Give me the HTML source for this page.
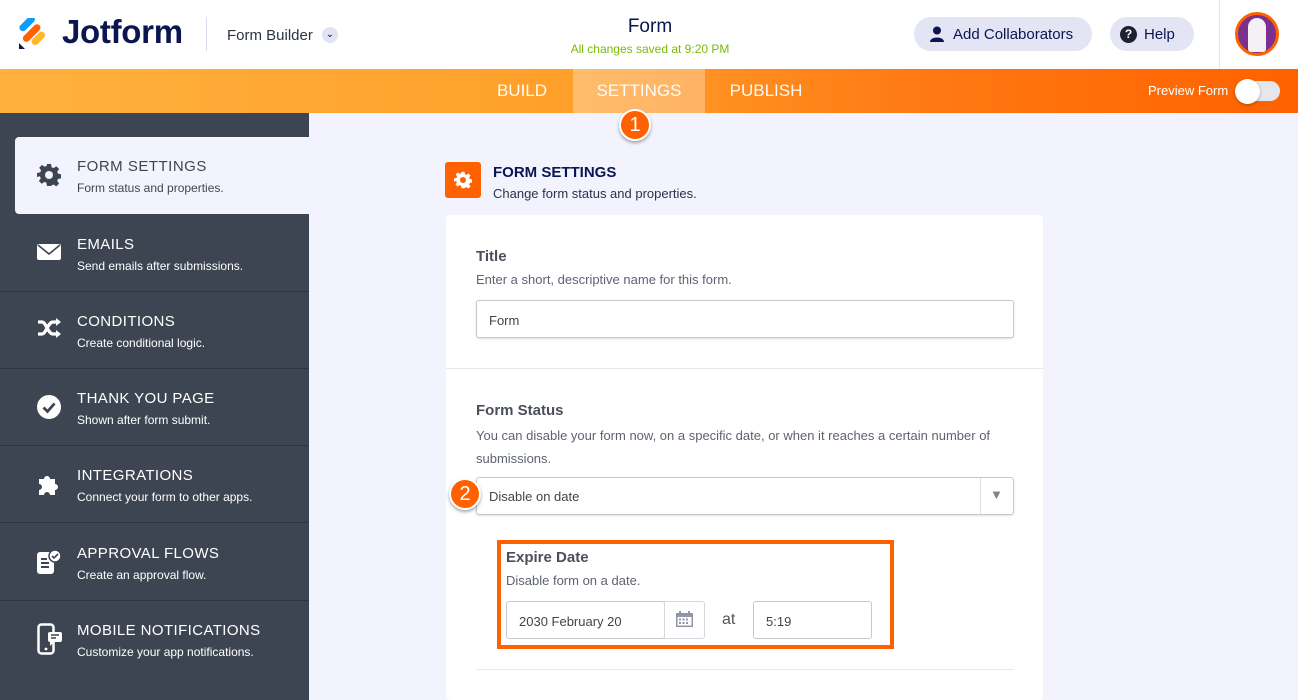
<!DOCTYPE html>
<html><head><meta charset="utf-8"><style>
*{margin:0;padding:0;box-sizing:border-box}
body{width:1298px;height:700px;overflow:hidden;background:#f3f3fe;font-family:"Liberation Sans",sans-serif;position:relative}
.a{position:absolute}
.hdr{left:0;top:0;width:1298px;height:69px;background:#fff}
.bar{left:0;top:69px;width:1298px;height:44px;background:linear-gradient(90deg,#ffb13d 0%,#ff9f2a 45%,#ff7a14 70%,#ff6100 100%)}
.tab{top:69px;height:44px;line-height:44px;color:#fff;font-size:17px;text-align:center;opacity:.95}
.side{left:0;top:113px;width:309px;height:587px;background:#3e4552}
.item{left:0;width:309px;height:77px;border-bottom:1px solid #2f353f}
.item .t{position:absolute;left:77px;top:21px;color:#fff;font-size:15px;letter-spacing:.4px}
.item .s{position:absolute;left:77px;top:44px;color:#fff;font-size:12px}
.item svg{position:absolute;left:37px;top:26px}
.card{left:446px;top:215px;width:597px;height:485px;background:#fff;border-radius:4px}
.lbl{font-weight:bold;color:#4a4f5a;font-size:15px}
.desc{color:#5e6373;font-size:13px}
.inp{background:#fff;border:1px solid #c8c8cc;border-radius:3px;font-size:13px;color:#444;box-shadow:0 1px 2px rgba(0,0,0,.12)}
.badge{width:32px;height:32px;border-radius:50%;background:#ff6100;border:2px solid #fff;color:#fff;font-size:20px;text-align:center;line-height:28px;box-shadow:0 2px 3px rgba(0,0,0,.35)}
</style></head><body>
<div class="a hdr"></div>
<svg class="a" style="left:18px;top:18px" width="30" height="32" viewBox="0 0 30 32"><rect x="4" y="-1" width="7" height="19" rx="3.5" transform="rotate(45 12 9)" fill="#0a9cff"/><rect x="11" y="4" width="7" height="22" rx="3.5" transform="rotate(45 14 14)" fill="#ff6100"/><rect x="17" y="12" width="7" height="16" rx="3.5" transform="rotate(45 20 20)" fill="#ffb629"/><path d="M1 25 L1 31 L7 31 Z" fill="#0a1551"/></svg>
<div class="a" style="left:62px;top:13px;font-size:33px;font-weight:bold;color:#0a1551;letter-spacing:-.3px">Jotform</div>
<div class="a" style="left:206px;top:17px;width:1px;height:34px;background:#dcdcec"></div>
<div class="a" style="left:227px;top:27px;font-size:15px;color:#2c3345">Form Builder</div>
<div class="a" style="left:322px;top:27px;width:16px;height:16px;border-radius:50%;background:#e2e3f2;color:#0a1551;font-size:10px;text-align:center;line-height:16px">&#8964;</div>
<div class="a" style="left:560px;top:16px;width:180px;text-align:center;font-size:19px;color:#0a1551">Form</div>
<div class="a" style="left:540px;top:42px;width:220px;text-align:center;font-size:12px;color:#78bb07">All changes saved at 9:20 PM</div>
<div class="a" style="left:914px;top:17px;width:178px;height:34px;border-radius:17px;background:#e3e5f5"></div>
<svg class="a" style="left:930px;top:26px" width="14" height="16" viewBox="0 0 14 16"><circle cx="7" cy="4.5" r="4" fill="#0a1551"/><path d="M0 16 C0 10 14 10 14 16Z" fill="#0a1551"/></svg>
<div class="a" style="left:953px;top:26px;font-size:15px;color:#0a1551">Add Collaborators</div>
<div class="a" style="left:1110px;top:17px;width:84px;height:34px;border-radius:17px;background:#e3e5f5"></div>
<div class="a" style="left:1120px;top:26px;width:17px;height:17px;border-radius:50%;background:#1e2230;color:#fff;font-size:12px;font-weight:bold;text-align:center;line-height:17px">?</div>
<div class="a" style="left:1144px;top:26px;font-size:15px;color:#0a1551">Help</div>
<div class="a" style="left:1219px;top:0;width:1px;height:69px;background:#e4e4ec"></div>
<div class="a" style="left:1235px;top:12px;width:44px;height:44px;border-radius:50%;background:#7b2f8f;border:3px solid #ff6100"></div>
<div class="a" style="left:1248px;top:18px;width:18px;height:34px;border-radius:9px 9px 3px 3px;background:#f4f0f4"></div>
<div class="a bar"></div>
<div class="a" style="left:573px;top:69px;width:132px;height:44px;background:rgba(255,255,255,.3)"></div>
<div class="a tab" style="left:480px;width:84px">BUILD</div>
<div class="a tab" style="left:573px;width:132px">SETTINGS</div>
<div class="a tab" style="left:718px;width:96px">PUBLISH</div>
<div class="a" style="left:1148px;top:83px;font-size:13px;color:#fff">Preview Form</div>
<div class="a" style="left:1236px;top:81px;width:44px;height:20px;border-radius:10px;background:#e6e7ec"></div>
<div class="a" style="left:1235px;top:79px;width:25px;height:25px;border-radius:50%;background:#fff;box-shadow:0 1px 3px rgba(0,0,0,.3)"></div>
<div class="a badge" style="left:619px;top:109px">1</div>

<div class="a side"></div>
<div class="a" style="left:15px;top:137px;width:294px;height:77px;background:#f3f3fe;border-radius:4px 0 0 4px"></div>
<svg class="a" style="left:37px;top:163px" width="24" height="24" viewBox="0 0 24 24"><path fill="#3e4552" d="M10 1h4l.6 3.2 2 .9 2.7-1.9 2.8 2.8-1.9 2.7.9 2 3.2.6v4l-3.2.6-.9 2 1.9 2.7-2.8 2.8-2.7-1.9-2 .9L14 23h-4l-.6-3.2-2-.9-2.7 1.9-2.8-2.8 1.9-2.7-.9-2L0 14v-4l3.2-.6.9-2L2.2 4.7 5 1.9l2.7 1.9 2-.9z"/><circle cx="12" cy="12" r="4" fill="#f3f3fe"/></svg>
<div class="a" style="left:77px;top:158px;font-size:15px;color:#3e4552;letter-spacing:.5px">FORM SETTINGS</div>
<div class="a" style="left:77px;top:181px;font-size:12px;color:#3e4552">Form status and properties.</div>

<div class="a item" style="top:215px"><svg width="24" height="18" viewBox="0 0 24 18" style="top:28px"><rect x="0" y="1" width="24" height="16" rx="2" fill="#fff"/><path d="M1 2 L12 11 L23 2" stroke="#3e4552" stroke-width="1.6" fill="none"/></svg><div class="t">EMAILS</div><div class="s">Send emails after submissions.</div></div>
<div class="a item" style="top:292px"><svg width="24" height="20" viewBox="0 0 24 20"><path d="M1 4h4c4 0 6 12 11 12h4M1 16h4c4 0 6-12 11-12h4" stroke="#fff" stroke-width="3.2" fill="none"/><path d="M19 0l5 4-5 4zM19 12l5 4-5 4z" fill="#fff"/></svg><div class="t">CONDITIONS</div><div class="s">Create conditional logic.</div></div>
<div class="a item" style="top:369px"><svg width="24" height="24" viewBox="0 0 24 24"><circle cx="12" cy="12" r="12" fill="#fff"/><path d="M6.5 12.5l4 4 7-8" stroke="#3e4552" stroke-width="2.8" fill="none"/></svg><div class="t">THANK YOU PAGE</div><div class="s">Shown after form submit.</div></div>
<div class="a item" style="top:446px"><svg width="24" height="24" viewBox="0 0 24 24"><path fill="#fff" d="M2 7h5a3 3 0 1 1 6 0h5v5a3 3 0 1 1 0 6v5h-5a3 3 0 1 0-6 0H2v-5a3 3 0 1 0 0-6z"/></svg><div class="t">INTEGRATIONS</div><div class="s">Connect your form to other apps.</div></div>
<div class="a item" style="top:524px"><svg width="24" height="24" viewBox="0 0 24 24"><rect x="0" y="2" width="17" height="22" rx="3" fill="#fff"/><path d="M4 9h6M4 13h8M4 17h8" stroke="#3e4552" stroke-width="2"/><circle cx="18" cy="6" r="6" fill="#fff" stroke="#3e4552" stroke-width="1.5"/><path d="M15 6l2 2 4-4" stroke="#3e4552" stroke-width="1.6" fill="none"/></svg><div class="t">APPROVAL FLOWS</div><div class="s">Create an approval flow.</div></div>
<div class="a item" style="top:601px;border:0"><svg width="26" height="32" viewBox="0 0 26 32" style="top:22px"><rect x="1.5" y="1.5" width="15" height="29" rx="3" fill="none" stroke="#fff" stroke-width="2.5"/><circle cx="9" cy="26" r="1.4" fill="#fff"/><rect x="11" y="9" width="14" height="10" rx="2" fill="#fff"/><path d="M14 12h8M14 15h5" stroke="#3e4552" stroke-width="1.4"/><path d="M13 19v4l4-4z" fill="#fff"/></svg><div class="t">MOBILE NOTIFICATIONS</div><div class="s">Customize your app notifications.</div></div>

<div class="a" style="left:445px;top:162px;width:36px;height:36px;border-radius:3px;background:#ff6100"></div>
<svg class="a" style="left:454px;top:171px" width="18" height="18" viewBox="0 0 24 24"><path fill="#fff" d="M10 1h4l.6 3.2 2 .9 2.7-1.9 2.8 2.8-1.9 2.7.9 2 3.2.6v4l-3.2.6-.9 2 1.9 2.7-2.8 2.8-2.7-1.9-2 .9L14 23h-4l-.6-3.2-2-.9-2.7 1.9-2.8-2.8 1.9-2.7-.9-2L0 14v-4l3.2-.6.9-2L2.2 4.7 5 1.9l2.7 1.9 2-.9z"/><circle cx="12" cy="12" r="4" fill="#ff6100"/></svg>
<div class="a" style="left:493px;top:164px;font-size:15px;font-weight:bold;color:#0a1551">FORM SETTINGS</div>
<div class="a" style="left:493px;top:186px;font-size:13px;color:#2c3345">Change form status and properties.</div>

<div class="a card"></div>
<div class="a lbl" style="left:476px;top:248px">Title</div>
<div class="a desc" style="left:476px;top:272px">Enter a short, descriptive name for this form.</div>
<div class="a inp" style="left:476px;top:300px;width:538px;height:38px;padding:12px 12px">Form</div>
<div class="a" style="left:446px;top:368px;width:597px;height:1px;background:#e8e8ec"></div>
<div class="a lbl" style="left:476px;top:402px">Form Status</div>
<div class="a desc" style="left:476px;top:424px;width:540px;line-height:23px">You can disable your form now, on a specific date, or when it reaches a certain number of submissions.</div>
<div class="a inp" style="left:476px;top:477px;width:538px;height:38px;padding:11px 12px">Disable on date</div>
<div class="a" style="left:980px;top:478px;width:1px;height:36px;background:#ddd"></div>
<div class="a" style="left:990px;top:487px;color:#8a8078;font-size:13px">&#9660;</div>
<div class="a badge" style="left:449px;top:478px">2</div>
<div class="a" style="left:497px;top:540px;width:397px;height:109px;border:4px solid #ff6100"></div>
<div class="a lbl" style="left:506px;top:549px;font-size:15px">Expire Date</div>
<div class="a desc" style="left:506px;top:573px">Disable form on a date.</div>
<div class="a" style="left:506px;top:601px;width:159px;height:38px;border:1px solid #c8c8cc;border-radius:3px;background:#fff;font-size:13px;color:#444;padding:12px 12px">2030 February 20</div>
<div class="a" style="left:664px;top:601px;width:41px;height:38px;border:1px solid #d8d8dc;border-radius:0 3px 3px 0;background:#fff"></div>
<svg class="a" style="left:676px;top:611px" width="17" height="16" viewBox="0 0 17 16"><rect x="0" y="2" width="17" height="14" fill="#8f96a6"/><rect x="1.5" y="6" width="14" height="8.5" fill="#fff"/><g fill="#8f96a6"><rect x="3" y="7.5" width="2" height="2"/><rect x="6.5" y="7.5" width="2" height="2"/><rect x="10" y="7.5" width="2" height="2"/><rect x="3" y="11" width="2" height="2"/><rect x="6.5" y="11" width="2" height="2"/><rect x="10" y="11" width="2" height="2"/><rect x="3" y="0" width="2" height="4"/><rect x="12" y="0" width="2" height="4"/></g></svg>
<div class="a" style="left:722px;top:611px;font-size:16px;color:#555">at</div>
<div class="a" style="left:753px;top:601px;width:119px;height:38px;border:1px solid #c8c8cc;border-radius:3px;background:#fff;font-size:13px;color:#444;padding:12px 12px">5:19</div>
<div class="a" style="left:476px;top:669px;width:538px;height:1px;background:#e8e8ec"></div>
</body></html>
